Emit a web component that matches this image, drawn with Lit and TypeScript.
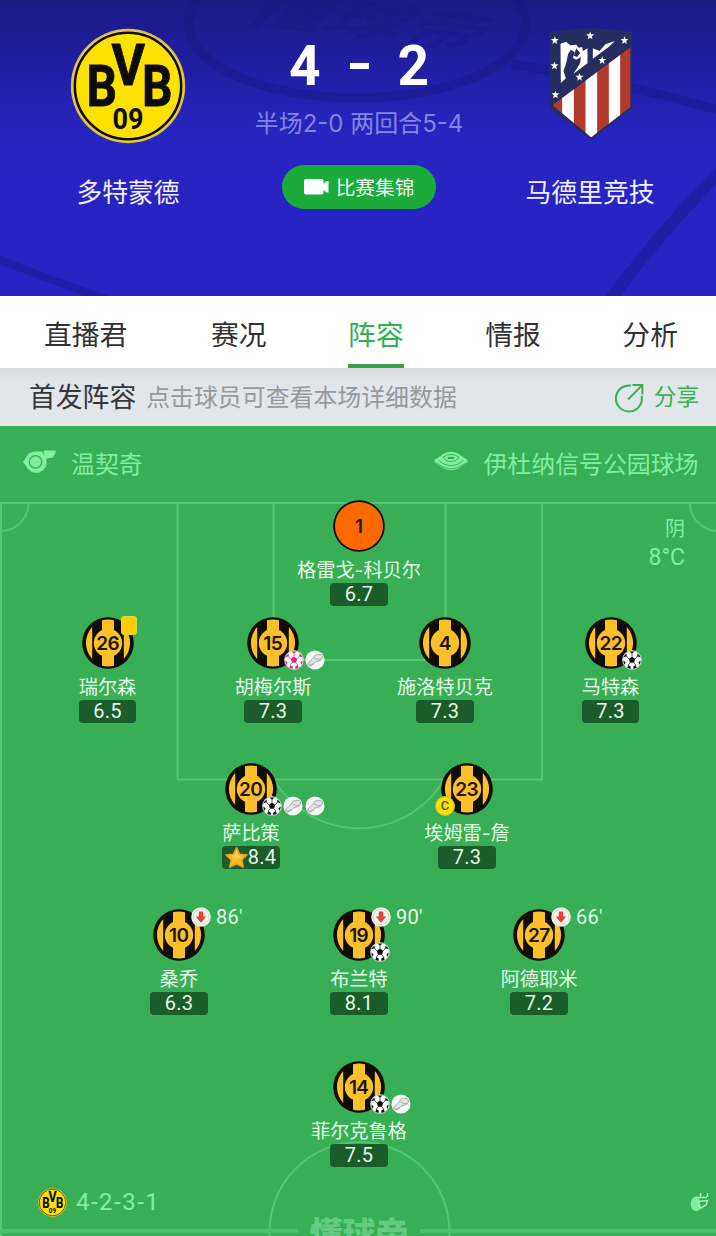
import { LitElement, html, svg, css, nothing } from 'lit';
import { customElement, property, state } from 'lit/decorators.js';
import { classMap } from 'lit/directives/class-map.js';
import { styleMap } from 'lit/directives/style-map.js';

type Mark = 'goal' | 'penalty' | 'assist';

interface Player {
  no: number;
  name: string;
  rating: string;
  x: number;
  y: number;
  marks?: Mark[];
  keeper?: boolean;
  captain?: boolean;
  card?: boolean;
  best?: boolean;
  off?: string;
}

const TABS = ['直播君', '赛况', '阵容', '情报', '分析'];

// x / y: centre of the shirt on the 716 x 810 pitch
const PLAYERS: Player[] = [
  { no: 1, name: '格雷戈-科贝尔', rating: '6.7', x: 359, y: 100, keeper: true },
  { no: 26, name: '瑞尔森', rating: '6.5', x: 107.5, y: 217, card: true },
  { no: 15, name: '胡梅尔斯', rating: '7.3', x: 273, y: 217, marks: ['penalty', 'assist'] },
  { no: 4, name: '施洛特贝克', rating: '7.3', x: 445, y: 217 },
  { no: 22, name: '马特森', rating: '7.3', x: 610.5, y: 217, marks: ['goal'] },
  { no: 20, name: '萨比策', rating: '8.4', x: 251, y: 363, marks: ['goal', 'assist', 'assist'], best: true },
  { no: 23, name: '埃姆雷-詹', rating: '7.3', x: 467, y: 363, captain: true },
  { no: 10, name: '桑乔', rating: '6.3', x: 179, y: 508.5, off: "86'" },
  { no: 19, name: '布兰特', rating: '8.1', x: 359, y: 508.5, marks: ['goal'], off: "90'" },
  { no: 27, name: '阿德耶米', rating: '7.2', x: 539, y: 508.5, off: "66'" },
  { no: 14, name: '菲尔克鲁格', rating: '7.5', x: 359, y: 661, marks: ['goal', 'assist'] },
];

const bvbCrest = html`
  <svg viewBox="0 0 116 116">
    <circle cx="58" cy="58" r="57.2" fill="#d9b968" />
    <circle cx="58" cy="58" r="55.5" fill="#fde100" />
    <circle cx="58" cy="58" r="53.2" fill="none" stroke="#0d0b04" stroke-width="2.6" />
    <g font-family="Roboto, sans-serif" font-weight="700" fill="#0d0b04" stroke="#0d0b04" stroke-width=".8">
      <text x="41.5" y="57" font-size="58" textLength="33.5" lengthAdjust="spacingAndGlyphs">V</text>
      <text x="16.5" y="78" font-size="58" textLength="30.5" lengthAdjust="spacingAndGlyphs">B</text>
      <text x="72" y="78" font-size="58" textLength="30.5" lengthAdjust="spacingAndGlyphs">B</text>
      <text x="42.5" y="101" font-size="29.5" textLength="31" lengthAdjust="spacingAndGlyphs" stroke="none">09</text>
    </g>
  </svg>
`;

const STARS = [[588, 122], [694, 108], [797, 122], [587, 198], [730, 182], [662, 232], [590, 285]];

const atleticoCrest = html`
  <svg viewBox="568 82 254 342">
    <path d="M570 97Q694 74 820 97V326L697 421L572 326Z" fill="#262d60" />
    <clipPath id="stripes"><path d="M581 317L815 143V322L697 413Z" /></clipPath>
    <g clip-path="url(#stripes)">
      <rect x="570" y="130" width="250" height="290" fill="#b23a2b" />
      <path d="M610 130h35v290h-35zM680 130h35v290h-35zM750 130h34v290h-34z" fill="#fff" />
    </g>
    <path
      fill="#fff"
      d="M605 132L622 126L634 137L652 135L660 144L670 142L672 154L686 146V191L644 222L664 190L666 172L652 180L642 174L648 158L636 150L628 162L622 190L614 214L621 236L606 250Z"
    />
    <path fill="#fff" d="M702 146L722 154L740 134L768 124L752 140L702 177Z" />
    <path d="M645 168L652 146L664 160L655 172Z" fill="#262d60" />
    ${STARS.map(
      ([x, y]) => svg`<path transform="translate(${x} ${y})" fill="#fff"
        d="M0-12L3-4L12-4L5 2L7 11L0 6L-7 11L-5 2L-12-4L-3-4Z" />`
    )}
  </svg>
`;

const ballIcon = (color: string) => html`
  <svg viewBox="0 0 20 20">
    <circle cx="10" cy="10" r="9.4" fill="#fff" stroke="#b9c4bb" stroke-width="1" />
    <g fill="${color}">
      <path d="M10 6.6L13.2 9L12 12.7H8L6.8 9Z" />
      <path d="M7.6 1.5H12.4L10 3.7ZM1.5 7.3L4.7 6.2L4.6 3.4L2.4 5.6ZM18.5 7.3L15.3 6.2L15.4 3.4L17.6 5.6Z" />
      <path d="M1.2 10.4L3.6 12.2L2.6 14.9ZM18.8 10.4L16.4 12.2L17.4 14.9Z" />
      <path d="M5.3 17.7L6.4 14.9L8.7 16.4L8.6 18.9ZM14.7 17.7L13.6 14.9L11.3 16.4L11.4 18.9Z" />
    </g>
    <path
      d="M10 6.6V3.5M13.2 9L15.6 6M12 12.7L13.8 15.2M8 12.7L6.2 15.2M6.8 9L4.4 6"
      stroke="${color}"
      stroke-width=".7"
    />
  </svg>
`;

const bootIcon = html`
  <svg viewBox="0 0 20 20">
    <circle cx="10" cy="10" r="9.6" fill="#f6f8f5" />
    <path
      d="M2.4 14.6C4 11.2 7 9.8 8.8 7.2C9.8 5 11.2 3.8 12.6 4.8L16 4.4C17.8 5.6 17.6 8.4 16.2 9.8C14 11.6 11.4 11 9.4 12.8C7.2 14.8 4.8 16 2.4 14.6Z"
      fill="#e6e3e6"
      stroke="#aaa6ab"
      stroke-width="1"
    />
    <path d="M3.6 16.4L8.8 14.2M9.4 7.6L12.4 9.8L16 9" stroke="#a7a3a8" stroke-width=".9" fill="none" />
  </svg>
`;

const offIcon = html`
  <svg viewBox="0 0 20 20">
    <circle cx="10" cy="10" r="9.8" fill="#f3f5f0" />
    <circle cx="10" cy="10" r="8" fill="none" stroke="#dcc9c2" stroke-width=".8" />
    <path d="M7.8 4.4H12.2V9.6H15.2L10 15.8L4.8 9.6H7.8Z" fill="#e8412f" />
  </svg>
`;

const starIcon = html`
  <svg viewBox="0 0 22 20">
    <path
      d="M11 .8L13.9 6.9L21 7.6L15.9 12.3L17.4 19L11 15.9L4.6 19L6.1 12.3L1 7.6L8.1 6.9Z"
      fill="#fdbd2c"
      stroke="#f6a01c"
      stroke-width="1.6"
      stroke-linejoin="round"
    />
    <path d="M11 3L13 8L18 8.4L11 11L5 8.4L9 8Z" fill="#ffd04e" />
  </svg>
`;

@customElement('lineup-player')
export class LineupPlayer extends LitElement {
  @property({ attribute: false }) player!: Player;

  static styles = css`
    :host {
      display: flex;
      flex-direction: column;
      align-items: center;
      width: 150px;
      color: #e2fbe6;
      white-space: nowrap;
    }

    .shirt {
      position: relative;
      width: 52px;
      height: 52px;
    }

    svg {
      display: block;
      width: 100%;
      height: 100%;
    }

    .name {
      margin-top: 3px;
      height: 28px;
      font-family: Inter, 'Noto Sans CJK SC', sans-serif;
      font-size: 19.2px;
      line-height: 30px;
    }

    .rating {
      display: flex;
      align-items: center;
      justify-content: center;
      width: 57.5px;
      height: 23px;
      border-radius: 4px;
      background: #1b5c2b;
      font: 20px/23px Roboto, sans-serif;
      letter-spacing: 0.3px;
    }

    .rating .star {
      width: 23px;
      height: 21px;
      margin-left: -1px;
    }

    .marks,
    .off {
      position: absolute;
      display: flex;
      align-items: center;
    }

    .marks {
      left: 37px;
      top: 33px;
      gap: 1.3px;
    }

    .off {
      left: 38px;
      top: -2px;
      gap: 5px;
      font: 20px/20px Roboto, sans-serif;
      letter-spacing: 0.3px;
    }

    .icon {
      width: 20px;
      height: 20px;
    }

    .card {
      position: absolute;
      left: 39px;
      top: -1px;
      box-sizing: border-box;
      width: 16px;
      height: 19px;
      border: 1px solid #d5dc4a;
      border-radius: 3px;
      background: #ffcb05;
    }

    .captain {
      position: absolute;
      left: -6px;
      top: 33px;
      box-sizing: border-box;
      width: 20px;
      height: 20px;
      border: 1px solid #b9c13a;
      border-radius: 50%;
      background: #fde000;
      color: #5d5708;
      font: 500 13px/18px Roboto, sans-serif;
      text-align: center;
    }
  `;

  render() {
    const p = this.player;
    return html`
      <div class="shirt">
        ${this._shirt(p)}
        ${p.card ? html`<div class="card"></div>` : nothing}
        ${p.captain ? html`<div class="captain">C</div>` : nothing}
        ${p.off ? html`<div class="off"><div class="icon">${offIcon}</div>${p.off}</div>` : nothing}
        ${p.marks
          ? html`<div class="marks">${p.marks.map((m) => html`<div class="icon">${this._mark(m)}</div>`)}</div>`
          : nothing}
      </div>
      <div class="name">${p.name}</div>
      <div class="rating">${p.best ? html`<div class="star">${starIcon}</div>` : nothing}${p.rating}</div>
    `;
  }

  private _mark(mark: Mark) {
    if (mark === 'assist') return bootIcon;
    return ballIcon(mark === 'goal' ? '#111' : '#e0218a');
  }

  private _shirt(p: Player) {
    return html`
      <svg viewBox="0 0 52 52">
        <circle cx="26" cy="26" r="25.8" fill="#0f0c05" />
        ${p.keeper
          ? svg`<circle cx="26" cy="26" r="24" fill="#ff6a00" />`
          : svg`
            <path d="M10.2 10V42A23.5 23.5 0 0 1 10.2 10ZM41.8 10V42A23.5 23.5 0 0 0 41.8 10Z" fill="#fcc02b" />
            <path d="M20 3.2Q26 2 32 3.2V48.8Q26 50 20 48.8Z" fill="#fcc02b" />
            <circle cx="26" cy="26" r="14.2" fill="#fcc02b" />`}
        <text
          x="25.7"
          y="32.7"
          text-anchor="middle"
          font-family="Inter, sans-serif"
          font-weight="600"
          font-size="19"
          letter-spacing="-.6"
          fill="#1d1505"
        >${p.no}</text>
      </svg>
    `;
  }
}

@customElement('app-root')
export class AppRoot extends LitElement {
  @state() private _tab = '阵容';

  static styles = css`
    :host {
      display: block;
      width: 716px;
      height: 1236px;
      overflow: hidden;
      font-family: 'Noto Sans CJK SC', sans-serif;
      white-space: nowrap;
    }

    svg {
      display: block;
    }

    /* score header */
    .header {
      position: relative;
      display: grid;
      grid-template-columns: 240px 1fr 236px;
      height: 296px;
      padding: 0;
      background: linear-gradient(#1b1983 0, #211ea0 60px, #2724bf 130px, #2824c4 180px);
      color: #f0f0ff;
    }

    .backdrop,
    .lines {
      position: absolute;
      inset: 0;
      width: 100%;
      height: 100%;
    }

    .team,
    .result {
      position: relative;
      display: flex;
      flex-direction: column;
      align-items: center;
    }

    .team:first-of-type {
      padding-left: 16px;
    }

    .team:last-of-type {
      padding-right: 16px;
    }

    .result {
      padding-right: 2px;
    }

    .crest {
      display: flex;
      align-items: center;
      justify-content: center;
      width: 116px;
      height: 116px;
      margin-top: 27.5px;
    }

    .crest.home svg {
      width: 116px;
    }

    .crest.away svg {
      width: 85px;
      height: 114px;
      margin-bottom: 4px;
    }

    .team-name {
      margin-top: 28px;
      font-size: 25.8px;
      line-height: 37px;
    }

    .score {
      display: flex;
      align-items: center;
      gap: 29px;
      margin-top: 34px;
      height: 64px;
      color: #fff;
      font: 700 55px/64px Roboto, sans-serif;
    }

    .score .dash {
      width: 19px;
      height: 6px;
      background: #fff;
    }

    .legs {
      height: 36px;
      margin-top: 7px;
      color: #8583e4;
      font-family: Inter, 'Noto Sans CJK SC', sans-serif;
      font-size: 24px;
      line-height: 38px;
    }

    .highlights {
      display: flex;
      align-items: center;
      justify-content: center;
      gap: 7px;
      width: 154px;
      height: 44px;
      margin-top: 23.5px;
      border-radius: 22px;
      background: #1aab3b;
      color: #eefcf0;
      font-size: 19.7px;
      line-height: 42px;
    }

    .highlights svg {
      width: 25px;
      height: 17px;
    }

    /* tabs */
    .tabs {
      display: flex;
      justify-content: space-between;
      box-sizing: border-box;
      height: 72px;
      padding: 0 38px 0 44px;
      background: #fff;
      color: #333;
      font-size: 27.8px;
      line-height: 74px;
    }

    .tab {
      box-sizing: border-box;
      height: 72px;
      cursor: pointer;
    }

    .tab:first-child {
      margin-right: 2px;
    }

    .tab.active {
      border-bottom: 4px solid #35a44d;
      color: #2fb350;
    }

    /* section bar */
    .bar {
      display: flex;
      align-items: center;
      box-sizing: border-box;
      height: 58px;
      padding: 0 17px 4px 29px;
      background: linear-gradient(#dadde0, #e1e4e8 14px, #e4e7eb);
    }

    .bar h2 {
      margin: 0 10px 0 0;
      color: #35373b;
      font-size: 26.8px;
      font-weight: 400;
    }

    .hint {
      flex: 1;
      color: #96999d;
      font-size: 23.9px;
    }

    .share {
      display: flex;
      align-items: center;
      gap: 10px;
      color: #35b255;
      font-size: 22.6px;
    }

    .share svg {
      width: 30px;
      height: 30px;
      margin-top: 5px;
    }

    /* pitch */
    .pitch {
      position: relative;
      display: flex;
      flex-direction: column;
      justify-content: space-between;
      height: 810px;
      overflow: hidden;
      background: #39af55;
      color: #82ed9f;
    }

    .info {
      position: relative;
      display: flex;
      align-items: center;
      height: 73px;
      padding: 0 17.5px 3px 23px;
      font-size: 23.9px;
    }

    .info .whistle {
      width: 33px;
      height: 23px;
      margin: -3px 15px 0 0;
    }

    .info .stadium {
      width: 34px;
      height: 20px;
      margin: -3px 15.5px 0 auto;
    }

    .weather {
      position: absolute;
      top: 87px;
      right: 31px;
      font-size: 20px;
      line-height: 30px;
      text-align: right;
    }

    .weather .temp {
      font: 23px/30px Roboto, sans-serif;
    }

    lineup-player {
      position: absolute;
      transform: translate(-50%, -26px);
    }

    .footer {
      position: relative;
      display: flex;
      align-items: center;
      height: 30px;
      padding: 0 7px 19px 38px;
      font: 24px/30px Roboto, sans-serif;
      letter-spacing: 1.5px;
    }

    .footer .mini {
      width: 29px;
      height: 29px;
      margin-right: 9px;
    }

    .footer .leaf {
      width: 20px;
      height: 22px;
      margin-left: auto;
    }
  `;

  render() {
    return html`
      ${this._header()}
      <nav class="tabs">
        ${TABS.map(
          (t) => html`<div class=${classMap({ tab: true, active: t === this._tab })} @click=${() => (this._tab = t)}>${t}</div>`
        )}
      </nav>
      <div class="bar">
        <h2>首发阵容</h2>
        <div class="hint">点击球员可查看本场详细数据</div>
        <div class="share">
          <svg viewBox="0 0 30 30" fill="none" stroke="#35b255" stroke-width="2">
            <path d="M17 2.6A13 13 0 1 0 27.6 12.6" />
            <path d="M14 16.5L28 2.4M18.5 2H28.4V11.5" />
          </svg>
          分享
        </div>
      </div>
      ${this._pitch()}
    `;
  }

  private _header() {
    return html`
      <header class="header">
        <svg class="backdrop" viewBox="0 0 716 296">
          <g fill="none" stroke="#17157a" stroke-opacity=".38">
            <ellipse cx="357" cy="24" rx="169" ry="74" stroke-width="9" />
            <path d="M512 64Q620 82 718 110" stroke-width="9" />
            <path d="M-4 258Q50 280 108 300" stroke-width="8" />
            <path d="M720 172Q660 232 610 300" stroke-width="12" />
          </g>
          <text
            transform="matrix(1 .12 -.5 .5 240 21)"
            font-family="Noto Sans CJK SC, sans-serif"
            font-weight="700"
            font-size="78"
            fill="#17157a"
            fill-opacity=".3"
          >懂球帝</text>
        </svg>
        <div class="team">
          <div class="crest home">${bvbCrest}</div>
          <div class="team-name">多特蒙德</div>
        </div>
        <div class="result">
          <div class="score"><span>4</span><span class="dash"></span><span>2</span></div>
          <div class="legs">半场2-0 两回合5-4</div>
          <div class="highlights">
            <svg viewBox="0 0 25 17" fill="#fff">
              <rect x="0" y="1" width="19.5" height="15.5" rx="2" />
              <path d="M18 7L22.5 3H24.5V14.5H22.5L18 10.5Z" />
            </svg>
            比赛集锦
          </div>
        </div>
        <div class="team">
          <div class="crest away">${atleticoCrest}</div>
          <div class="team-name">马德里竞技</div>
        </div>
      </header>
    `;
  }

  private _pitch() {
    return html`
      <section class="pitch">
        <svg class="lines" viewBox="0 0 716 810">
          <g fill="none" stroke="#56c473" stroke-width="2">
            <path d="M0 77H716M1 77V810" />
            <path d="M177.5 77V353.5H542V77M273.5 77V234H445.5V77" />
            <path d="M28.5 77A28 28 0 0 1 0 105M690 77A28 28 0 0 0 718 105" />
            <path d="M274 354A99 99 0 0 0 444 354" />
            <circle cx="359.5" cy="806" r="90" />
            <path d="M0 805H298M420 805H716" stroke-width="4" stroke="#4fbe6c" />
          </g>
          <text
            x="359"
            y="819.5"
            text-anchor="middle"
            font-family="Noto Sans CJK SC, sans-serif"
            font-weight="900"
            font-size="33"
            fill="#65ca82"
          >懂球帝</text>
        </svg>
        <div class="info">
          <svg class="whistle" viewBox="0 0 33 23" fill="#82ed9f">
            <path d="M0 12L3 7.5A10.3 10.3 0 0 1 13 1.5H20L22 0.5H32.5V3L30 7.5L23 8.5A10.4 10.4 0 1 1 3 15.8Z" />
            <circle cx="12.6" cy="11.8" r="6.2" fill="none" stroke="#39af55" stroke-width="1.4" />
            <path d="M19.5 1L21 4.5" stroke="#39af55" stroke-width="1" />
          </svg>
          温契奇
          <svg class="stadium" viewBox="0 0 34 20">
            <path d="M.5 9L10 2.4Q17 -.8 24 2.4L33.5 9V11.5L24 17.6Q17 21 10 17.6L.5 11.5Z" fill="#82ed9f" />
            <path d="M1 11.4L10.5 16.6Q17 19 23.5 16.6L33 11.4" fill="none" stroke="#39af55" stroke-width=".8" />
            <path d="M4.5 9.4L11 13.6Q17 16 23 13.6L29.5 9.4" fill="none" stroke="#39af55" stroke-width=".9" />
            <path d="M9 6.4L13 4Q17 2.8 21 4L25 6.4L21 9.8Q17 11.4 13 9.8Z" fill="none" stroke="#39af55" stroke-width=".9" />
            <ellipse cx="17" cy="6.9" rx="3.4" ry="1.2" fill="#39af55" />
          </svg>
          伊杜纳信号公园球场
        </div>
        <div class="weather">
          <div>阴</div>
          <div class="temp">8°C</div>
        </div>
        ${PLAYERS.map(
          (p) => html`<lineup-player .player=${p} style=${styleMap({ left: `${p.x}px`, top: `${p.y}px` })}></lineup-player>`
        )}
        <div class="footer">
          <div class="mini">${bvbCrest}</div>
          4-2-3-1
          <svg class="leaf" viewBox="0 0 20 22">
            <path d="M3 8Q6 4 10 6L12 17Q9 22 4 19Q0 14 3 8Z" fill="#82ed9f" />
            <path d="M11.5 2V7M18.5 2V6M9 6.5H18M8 10.5L18.5 9.5L17 14L12 17L9 14" fill="none" stroke="#a5f3b8" stroke-width="1.5" />
          </svg>
        </div>
      </section>
    `;
  }
}
